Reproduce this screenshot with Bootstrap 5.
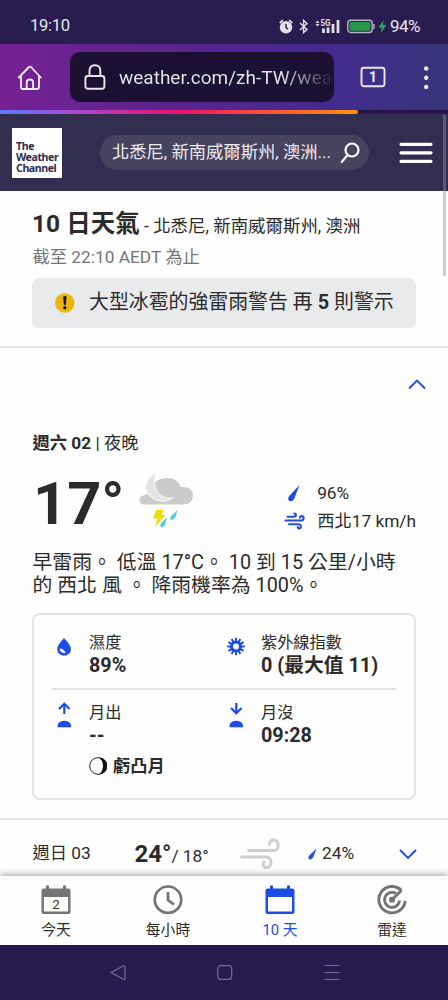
<!DOCTYPE html>
<html lang="zh-TW">
<head>
<meta charset="utf-8">
<meta name="viewport" content="width=device-width, initial-scale=1">
<title>10 日天氣</title>
<link rel="stylesheet" href="https://cdn.jsdelivr.net/npm/bootstrap@5.3.0/dist/css/bootstrap.min.css">
<style>
:root{--ink:#2b2b2b;--blue:#1b4de4;--night:#281b4d}
body{font-family:Roboto,"Noto Sans CJK TC",sans-serif;color:var(--ink);width:448px;height:1000px;background:#fefefe}
svg{display:block;flex:none}
.nw{white-space:nowrap}
.statusbar{height:44px;background:#291c4e;color:#e9e5f0;padding:8px 28px 0 30px}
.clock{font-size:16.6px;letter-spacing:-.3px}
.toolbar{height:66px;background:linear-gradient(90deg,#762193 0%,#59258f 42%,#432b90 73%,#37357a 100%);padding:0 18px 0 17px}
.urlbox{width:264px;height:50px;border-radius:10px;background:#1c1133;padding-left:14px;margin-left:27px}
.urltext{font-size:19px;line-height:26px;padding-top:1px;width:213px;margin-left:13px;color:transparent;background:linear-gradient(90deg,#ece8f2 76%,#1c1133 101%);-webkit-background-clip:text;background-clip:text}
.loadtrack{height:4px;background:#271747}
.loadbar{width:358px;background:linear-gradient(90deg,#5b7cff 0%,#a34cd4 19%,#ee0f6d 50%,#ff4b38 72%,#ff9208 100%);border-radius:0 2px 2px 0}
.sitehead{height:77px;background:#322e50;padding:0 15px 0 12px}
.brandbox{width:50px;height:50px;background:#fff;color:#2d2a50;font:700 10.6px/11.1px "Noto Sans",sans-serif;padding:13px 0 0 4px;letter-spacing:-.42px}
.searchpill{width:269px;height:35px;border-radius:18px;background:#46435f;color:#ececf1;font-size:17.3px;padding:0 9px 0 12px;margin-left:38px}
.scrollthumb{left:443px;top:114px;width:3px;height:162px;background:rgba(145,145,145,.45);border-radius:2px}
.intro{height:157px;padding:19px 32px 0;border-bottom:2px solid #e3e3e5}
.intro h1{font-size:24.5px;line-height:28px;font-weight:700;margin:0}
.place{font-size:17.45px;font-weight:400}
.asof{font-size:17.3px;line-height:24px;color:#757575;margin-top:5px;padding-left:.5px}
.alertbox{height:50px;border-radius:7px;background:#e9eaec;margin-top:9px;padding:0 22px;font-size:19.9px}
.alertbox span{margin-left:14px}
.dayfull{height:472px;padding:29px 32px 0 32px;border-bottom:2px solid #e3e3e5}
.dayname{font-size:17.3px;line-height:24px;margin-top:40px;padding-left:.5px}
.nowrow{height:86px}
.bigtemp{font-size:59.5px;line-height:70px;font-weight:700;width:107px;padding-left:1px;margin-top:14px}
.metrics{font-size:17.3px;line-height:28px;margin-top:24px}
.metrics svg{width:22px;margin-right:11px}
.story{font-size:19.85px;line-height:23px;margin-top:10px;padding-left:.5px}
.detail{height:187px;border:2px solid #e4e4e6;border-radius:8px;margin-top:16px;padding:17px 18px 0}
.cellbox{width:172px;padding:0 0 0 4px}
.cellbox svg.ic{width:18px;margin-right:16px;margin-left:-1px}
.lab{font-size:16.2px;line-height:22px}
.val{font-size:19.8px;line-height:23px;font-weight:700}
.rule{border-top:2px solid #e2e2e4}
.dayrow{height:56px;padding:11px 20px 0 32.5px;font-size:17.3px}
.tabs{height:69px;background:#fefefe;box-shadow:0 -2px 6px rgba(0,0,0,.3);z-index:2;font-size:14.8px}
.tabs>div{width:112px;padding-top:9px}
.tabs span{line-height:22px;margin-top:4px}
.sysnav{height:55px;background:var(--night)}
</style>
</head>
<body class="overflow-hidden position-relative d-flex flex-column">
<div class="statusbar d-flex align-items-center pt-2">
  <span class="clock me-auto nw">19:10</span>
  <div class="d-flex align-items-center">
  <svg width="14" height="15" viewBox="0 0 14 15" style="margin-right:6px"><circle cx="7" cy="8.300" r="6.200" fill="#e4e0ea"/><path d="M.8 4 3.800 1.200M13.200 4l-3-2.800" stroke="#e4e0ea" stroke-width="1.800"/><path d="M7 5v3.500l2 1.800" stroke="#291c4e" stroke-width="1.500" fill="none"/></svg>
  <svg width="10" height="15" viewBox="0 0 10 15" style="margin-right:6px"><path d="M1 4l7 6.600-3.400 3V1.400L8 4.400 1 11" fill="none" stroke="#e4e0ea" stroke-width="1.400"/></svg>
  <svg width="26" height="15" viewBox="0 0 26 15" style="margin-right:6px"><path d="M.5 4 2.500 1.500 4.500 4M.5 5l2 2.500 2-2.500" fill="#e4e0ea"/><text x="5.500" y="6.900" font-size="8.500" font-weight="700" fill="#e4e0ea" style="font-family:'Liberation Sans Narrow',Roboto" textLength="10" lengthAdjust="spacingAndGlyphs">5G</text><path d="M8.500 9.500v4.500M13 8.500v5.500M18 5v9M23 1v13" stroke="#e4e0ea" stroke-width="2.800"/></svg>
  <svg width="28" height="15" viewBox="0 0 28 15" style="margin-right:3px"><rect x=".8" y="1.300" width="24.400" height="12.200" rx="3" fill="none" stroke="#bab3c6" stroke-width="1.400"/><rect x="2.500" y="3" width="21" height="8.800" rx="1.500" fill="#2b964e"/><path d="M27 5v5" stroke="#bab3c6" stroke-width="1.400"/></svg>
  <svg width="9" height="15" viewBox="0 0 9 15" style="margin-right:3px"><path d="M5.500 1 .5 8.500h3.200L2.800 14 8.500 6H5z" fill="#2fa356"/></svg>
  <span class="nw" style="font-size:17px;width:30px;letter-spacing:-.6px;padding-top:1px">94%</span>
  </div>
</div>
<div class="toolbar d-flex align-items-center">
  <svg width="26" height="28" viewBox="0 0 26 28"><g fill="none" stroke="#f2edf7" stroke-width="1.800" stroke-linejoin="round" stroke-linecap="round"><path d="M1.800 14.500 12 4q1-.8 2 0l9.800 10.500"/><path d="M4 13V24q0 2 2 2h14q2 0 2-2V13"/><path d="M9.700 26v-6.500q0-3 3.200-3t3.200 3V26"/></g></svg>
  <div class="urlbox d-flex align-items-center">
    <svg width="22" height="28" viewBox="0 0 22 28"><g fill="none" stroke="#ebe7f1" stroke-width="1.900"><rect x="1.400" y="13" width="19" height="12.800" rx="2.500"/><path d="M5.500 13V8q0-5.800 5.400-5.800T16.300 8v5"/></g></svg>
    <span class="urltext nw overflow-hidden">weather.com/zh-TW/wea</span>
  </div>
  <svg width="26" height="22" viewBox="0 0 26 22" style="margin-left:26px"><rect x="1.500" y="1.800" width="23" height="18.500" rx="2.500" fill="none" stroke="#eae7f4" stroke-width="1.900"/><text x="13" y="16" text-anchor="middle" font-size="14.500" font-weight="700" fill="#eae7f4" style="font-family:Roboto">1</text></svg>
  <svg width="6" height="26" viewBox="0 0 6 26" class="ms-auto" fill="#f0eef5"><circle cx="2.200" cy="4.500" r="2.200"/><circle cx="2.200" cy="13.700" r="2.200"/><circle cx="2.200" cy="22.900" r="2.200"/></svg>
</div>
<div class="loadtrack d-flex"><div class="loadbar"></div></div>
<header class="sitehead d-flex align-items-center">
  <div class="brandbox nw">The<br>Weather<br>Channel</div>
  <div class="searchpill d-flex align-items-center justify-content-between nw"><span>北悉尼, 新南威爾斯州, 澳洲...</span>
    <svg width="20" height="22" viewBox="0 0 20 22"><g fill="none" stroke="#fff" stroke-width="2.200" stroke-linecap="round"><circle cx="12" cy="8" r="6.500"/><path d="M7.500 13 1.800 20"/></g></svg></div>
  <svg width="34" height="22" viewBox="0 0 34 22" class="ms-auto"><path d="M2 2.300h30M2 10.800h30M2 19.300h30" stroke="#fff" stroke-width="3.200" stroke-linecap="round"/></svg>
</header>
<section class="intro">
  <h1 class="nw">10 日天氣<span class="place"> - 北悉尼, 新南威爾斯州, 澳洲</span></h1>
  <div class="asof nw">截至 22:10 AEDT 為止</div>
  <div class="alertbox d-flex align-items-center nw">
    <svg width="21" height="20" viewBox="0 0 21 20"><circle cx="10.800" cy="10" r="9.800" fill="#ecb70c"/><path d="M9.100 3.700q1.700-1.600 3.500 0l-.8 8.300h-1.900z" fill="#161616"/><circle cx="10.800" cy="14.800" r="1.700" fill="#161616"/></svg>
    <span>大型冰雹的強雷雨警告 再 <b>5</b> 則警示</span>
  </div>
</section>
<section class="dayfull">
  <svg width="18" height="14" viewBox="0 0 18 14" class="ms-auto" style="margin-right:-10px"><path d="M1 11.500 9 3.500l8 8" fill="none" stroke="#1b4de4" stroke-width="1.800"/></svg>
  <div class="dayname nw"><b>週六 02</b> | 夜晚</div>
  <div class="nowrow d-flex">
    <div class="bigtemp nw">17°</div>
    <svg width="54" height="57" viewBox="0 0 54 57" style="margin-top:17px"><path d="M5 32.500a4.500 4.500 0 0 1 0-9q2-2 5-2Q14 6 28 6q11 0 14 9 11-1 12 8 0 9-9 9.500z" fill="#cbcbcc"/><path d="M18 1C8 4 4 15 9 22s17 10 24.500 4C19 28 11 13 18 1z" fill="#e4e4e5" stroke="#fefefe" stroke-width="1"/><path d="M17 38h8l-2.500 5h4L16 55l2.500-8.500H14z" fill="#f0dc08"/><path d="M28 45.500 22 51q-2 4 1 4 2 0 3-2zM38.500 38l-6.500 6q-2 4 1 4 2 0 3.500-3z" fill="#55c8ef"/></svg>
    <div class="metrics ms-auto nw">
      <div class="d-flex align-items-center"><svg height="20" viewBox="0 0 22 20"><path d="M15.500 2 4.800 13.500q-1.800 4.500 1.700 4.700 2.800.2 4.300-3.900z" fill="#1b4de4"/></svg>96%</div>
      <div class="d-flex align-items-center"><svg height="18" viewBox="0 0 22 18"><g fill="none" stroke="#1b4de4" stroke-width="2.100" stroke-linecap="round"><path d="M3.500 4.800h6.200c3 0 2.700-3.500.6-3.300"/><path d="M1.500 8.500h15.500c4 0 3-5 .5-4.500q-1.500.4-1.500 1.600"/><path d="M5 12.200h9.500c3.500 0 2.700 4.700.4 4.200q-1.200-.3-1.200-1.400"/></g></svg>西北17 km/h</div>
    </div>
  </div>
  <div class="story nw">早雷雨。 低溫 17°C。 10 到 15 公里/小時<br>的 西北 風 。 降雨機率為 100%。</div>
  <div class="detail">
    <div class="d-flex nw" style="height:56px">
      <div class="cellbox d-flex"><svg class="ic" height="32" viewBox="0 0 18 32"><path d="M9 6Q2.200 13.500 2.200 17.300a6.900 6.400 0 0 0 13.800 0Q16 13.500 9 6z" fill="#1b4de4"/><path d="M4.500 16.500q4.500 0 6 4.500-4.800 1-6-4.500z" fill="#fff"/></svg><div><div class="lab">濕度</div><div class="val">89%</div></div></div>
      <div class="cellbox d-flex"><svg class="ic" height="32" viewBox="0 0 18 32"><g fill="none" stroke="#1b4de4"><circle cx="9" cy="14.500" r="4.500" stroke-width="3"/><path stroke-width="2" d="M9 5.800v4M9 19.200v4M.3 14.500h4M13.700 14.500h4M4.650 6.960l2 3.500M11.350 18.540l2 3.500M1.460 10.150l3.500 2M13.040 16.850l3.500 2M1.460 18.850l3.500-2M13.040 12.150l3.500-2M4.650 22.040l2-3.500M11.350 10.460l2-3.500"/></g></svg><div><div class="lab">紫外線指數</div><div class="val">0 (最大值 11)</div></div></div>
    </div>
    <div class="rule"></div>
    <div class="d-flex nw" style="padding-top:12px">
      <div class="cellbox d-flex"><svg class="ic" height="32" viewBox="0 0 18 32"><path d="M9.300 12V2.500M4 7 9.300 1.800 14.600 7" fill="none" stroke="#1b4de4" stroke-width="2.200"/><path d="M2.300 25.200q0-6.500 7-6.500t7 6.500z" fill="#1b4de4"/></svg><div><div class="lab">月出</div><div class="val">--</div>
        <div class="d-flex align-items-center" style="font-size:17.2px;line-height:22px;margin-top:8px"><svg width="18" height="18" viewBox="0 0 18 18" style="margin-right:6px"><circle cx="9" cy="9" r="8.300" fill="#fff" stroke="#111" stroke-width=".9"/><path d="M10 .5a8.500 8.500 0 0 1 0 17Q14 14 14 9T10 .5z" fill="#111"/></svg><b>虧凸月</b></div></div></div>
      <div class="cellbox d-flex"><svg class="ic" height="32" viewBox="0 0 18 32"><path d="M9.300 1v10M4 6l5.300 5.200L14.600 6" fill="none" stroke="#1b4de4" stroke-width="2.200"/><path d="M2.300 25.200q0-6.500 7-6.500t7 6.500z" fill="#1b4de4"/></svg><div><div class="lab">月沒</div><div class="val">09:28</div></div></div>
    </div>
  </div>
</section>
<section class="dayrow d-flex align-items-center nw">
  <div style="width:102px">週日 03</div>
  <div style="width:105.500px"><b style="font-size:24px">24°</b>/ 18°</div>
  <svg width="40" height="32" viewBox="0 0 40 32"><g fill="none" stroke="#cecece" stroke-width="2.900" stroke-linecap="round"><path d="M8.500 12.500H34c6 0 5-10.500 0-10.500q-4.500 0-4.500 4.500"/><path d="M1.500 19H26c7 0 6 10.500 1 10.500-4 0-5-4-3-5.500"/></g></svg>
  <svg width="11" height="14" viewBox="0 0 11 14" style="margin-left:27px"><path d="M9.500 1.500 1.800 9q-1 3.500 1.200 3.500t3.500-3z" fill="#1b4de4"/></svg>
  <span style="margin-left:4px">24%</span>
  <svg width="18" height="14" viewBox="0 0 18 14" class="ms-auto" style="margin-right:11px"><path d="M1 3l8 8 8-8" fill="none" stroke="#1b4de4" stroke-width="1.900"/></svg>
</section>
<nav class="tabs d-flex nw text-center position-relative">
  <div class="d-flex flex-column align-items-center"><svg width="30" height="30" viewBox="0 0 30 30"><path d="M2.500 3.500H5V1q1.500-1.500 3 0v2.500h14V1q1.500-1.500 3 0v2.500h2.500q2 0 2 2V27q0 2-2 2h-25q-2 0-2-2V5.500q0-2 2-2z" fill="#747474"/><path d="M3 12h24v14.500H3z" fill="#fefefe"/><text x="15" y="23.900" text-anchor="middle" font-size="13.500" fill="#333" style="font-family:Roboto">2</text></svg><span>今天</span></div>
  <div class="d-flex flex-column align-items-center"><svg width="30" height="30" viewBox="0 0 30 30"><g fill="none" stroke="#747474" stroke-width="2.700"><circle cx="15" cy="14.700" r="13.200"/><path d="M15 7v8l6 4.500"/></g></svg><span>每小時</span></div>
  <div class="d-flex flex-column align-items-center" style="color:#1b4de4"><svg width="30" height="30" viewBox="0 0 30 30"><path d="M2.500 3.500H5V1q1.500-1.500 3 0v2.500h14V1q1.500-1.500 3 0v2.500h2.500q2 0 2 2V27q0 2-2 2h-25q-2 0-2-2V5.500q0-2 2-2z" fill="#1b4de4"/><path d="M3 12h24v14.500H3z" fill="#fefefe"/></svg><span>10 天</span></div>
  <div class="d-flex flex-column align-items-center"><svg width="30" height="30" viewBox="0 0 30 30"><g fill="none" stroke="#747474" stroke-width="2.900"><path d="M24.500 5.400A13.200 13.200 0 1 0 28.200 16"/><path d="M19 8.500A7.500 7.500 0 1 0 22.500 15.500"/><path d="M15 14.700l9.300-9.300"/></g><circle cx="15" cy="14.700" r="3" fill="#747474"/></svg><span>雷達</span></div>
</nav>
<div class="sysnav d-flex align-items-center">
  <svg width="448" height="20" viewBox="0 0 448 20"><g fill="none" stroke="#776d90" stroke-width="1.200" stroke-linejoin="round"><path d="M111 9.500 124 2.500q1 0 1 1v12q0 1-1 1z"/><rect x="217.700" y="2.700" width="14" height="13.600" rx="3"/><path d="M324.500 2.500h15M324.500 9.500h15M324.500 16.500h15"/></g></svg>
</div>
<div class="scrollthumb position-absolute"></div>
<script src="https://cdn.jsdelivr.net/npm/bootstrap@5.3.0/dist/js/bootstrap.bundle.min.js"></script>
</body>
</html>
